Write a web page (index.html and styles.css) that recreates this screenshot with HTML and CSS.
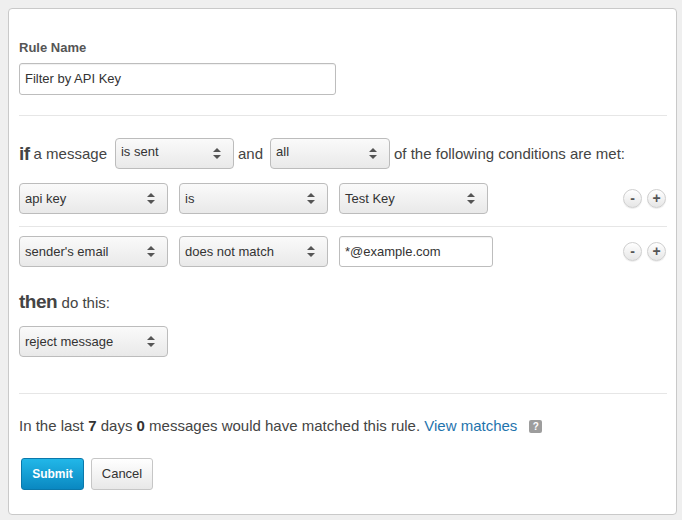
FILE: index.html
```html
<!DOCTYPE html>
<html>
<head>
<meta charset="utf-8">
<link rel="stylesheet" href="styles.css">
</head>
<body>
<div class="card">
  <div class="label">Rule Name</div>
  <div class="input wide">Filter by API Key</div>
  <div class="hr hr-top"></div>

  <div class="ifrow">
    <span class="kw">if</span><span class="txt">a message</span>
    <div class="select s-is top">is sent<span class="arr"></span></div>
    <span class="txt">and</span>
    <div class="select s-all top">all<span class="arr"></span></div>
    <span class="txt">of the following conditions are met:</span>
  </div>

  <div class="cond first">
    <div class="select">api key<span class="arr"></span></div>
    <div class="select">is<span class="arr"></span></div>
    <div class="select">Test Key<span class="arr"></span></div>
    <div class="pm"><span class="circ minus">-</span><span class="circ plus">+</span></div>
  </div>
  <div class="hr hr-mid"></div>
  <div class="cond second">
    <div class="select">sender's email<span class="arr"></span></div>
    <div class="select">does not match<span class="arr"></span></div>
    <div class="input email">*@example.com</div>
    <div class="pm"><span class="circ minus">-</span><span class="circ plus">+</span></div>
  </div>

  <div class="then"><span class="kw">then</span> <span class="txt">do this:</span></div>
  <div class="select action">reject message<span class="arr"></span></div>

  <div class="hr hr-bottom"></div>

  <div class="stats">In the last <b>7</b> days <b>0</b> messages would have matched this rule. <a class="link">View matches</a><span class="help">?</span></div>

  <div class="buttons">
    <span class="btn primary">Submit</span>
    <span class="btn cancel">Cancel</span>
  </div>
</div>
</body>
</html>
```
FILE: styles.css
```css
html, body { margin: 0; padding: 0; }
body {
  background: #efefef;
  font-family: "Liberation Sans", Arial, sans-serif;
  color: #444;
  padding: 8px;
}
.card {
  width: 648px;
  background: #fff;
  border: 1px solid #c9c9c9;
  border-radius: 4px;
  padding: 31px 9px 24px 10px;
}
.label {
  font-size: 13px;
  font-weight: bold;
  color: #555;
  line-height: 16px;
  height: 16px;
}
.input {
  box-sizing: border-box;
  height: 32px;
  border: 1px solid #bdbdbd;
  border-radius: 3px;
  background: #fff;
  font-size: 13px;
  color: #333;
  line-height: 30px;
  padding-left: 5px;
  box-shadow: inset 0 1px 1px rgba(0,0,0,0.06);
}
.input.wide { width: 317px; margin-top: 7px; }
.hr { height: 1px; background: #e6e6e6; }
.hr-top { margin-top: 20px; }
.ifrow {
  margin-top: 22px;
  display: flex;
  align-items: center;
  height: 31px;
}
.kw { font-size: 19px; font-weight: bold; color: #444; letter-spacing: -0.5px; }
.txt { font-size: 15px; color: #444; }
.ifrow .kw { margin-right: 4px; }
.select {
  box-sizing: border-box;
  position: relative;
  width: 149px;
  height: 31px;
  border: 1px solid #bcbcbc;
  border-radius: 4px;
  background: linear-gradient(#fafafa, #e9e9e9);
  font-size: 13px;
  color: #333;
  line-height: 29px;
  padding-left: 5px;
  flex: none;
}
.select.top { line-height: 26px; }
.arr {
  position: absolute;
  right: 12px;
  top: 50%;
  width: 0; height: 0;
  margin-top: -6px;
  border-left: 4px solid transparent;
  border-right: 4px solid transparent;
  border-bottom: 4px solid #555;
}
.arr::after {
  content: "";
  position: absolute;
  left: -4px;
  top: 7px;
  border-left: 4px solid transparent;
  border-right: 4px solid transparent;
  border-top: 4px solid #555;
}
.s-is { width: 119px; margin-left: 8px; margin-right: 4px; }
.s-all { width: 120px; margin-left: 7px; margin-right: 4px; }
.cond {
  display: flex;
  align-items: center;
  gap: 11px;
  height: 31px;
}
.cond.first { margin-top: 14px; }
.hr-mid { margin-top: 12px; }
.cond.second { margin-top: 9px; }
.input.email { width: 154px; height: 31px; line-height: 29px; }
.pm {
  margin-left: auto;
  margin-right: 1px;
  display: flex;
  gap: 5px;
}
.circ {
  box-sizing: border-box;
  width: 19px;
  height: 19px;
  border-radius: 50%;
  border: 1px solid #cfcfcf;
  background: linear-gradient(#ffffff, #e6e6e6);
  box-shadow: 0 1px 1px rgba(0,0,0,0.08);
  color: #555;
  font-weight: bold;
  font-size: 14px;
  line-height: 16px;
  text-align: center;
}
.then { margin-top: 24px; line-height: 22px; height: 22px; }
.then .kw { font-size: 19px; }
.select.action { margin-top: 13px; }
.hr-bottom { margin-top: 36px; }
.stats {
  margin-top: 22px;
  font-size: 15px;
  line-height: 20px;
  color: #444;
  display: flex;
  align-items: center;
  white-space: pre;
}
.stats b { color: #333; }
.link { color: #1f74ad; text-decoration: none; }
.help {
  display: inline-block;
  width: 13px;
  height: 13px;
  background: #9d9d9d;
  border-radius: 2px;
  color: #fff;
  font-size: 10px;
  font-weight: bold;
  line-height: 13px;
  text-align: center;
  margin-left: 12px;
}
.buttons {
  margin-top: 22px;
  display: flex;
  gap: 7px;
  padding-left: 2px;
}
.btn {
  box-sizing: border-box;
  height: 32px;
  border: 1px solid #c6c6c6;
  border-radius: 3px;
  background: linear-gradient(#ffffff, #e8e8e8);
  font-size: 13px;
  line-height: 30px;
  color: #333;
  text-align: center;
}
.btn.cancel { width: 62px; }
.btn.primary {
  width: 63px;
  background: linear-gradient(#22b7e8, #0a88c1);
  border-color: #0a78ab;
  color: #fff;
  font-weight: bold;
  font-size: 12px;
}
```
